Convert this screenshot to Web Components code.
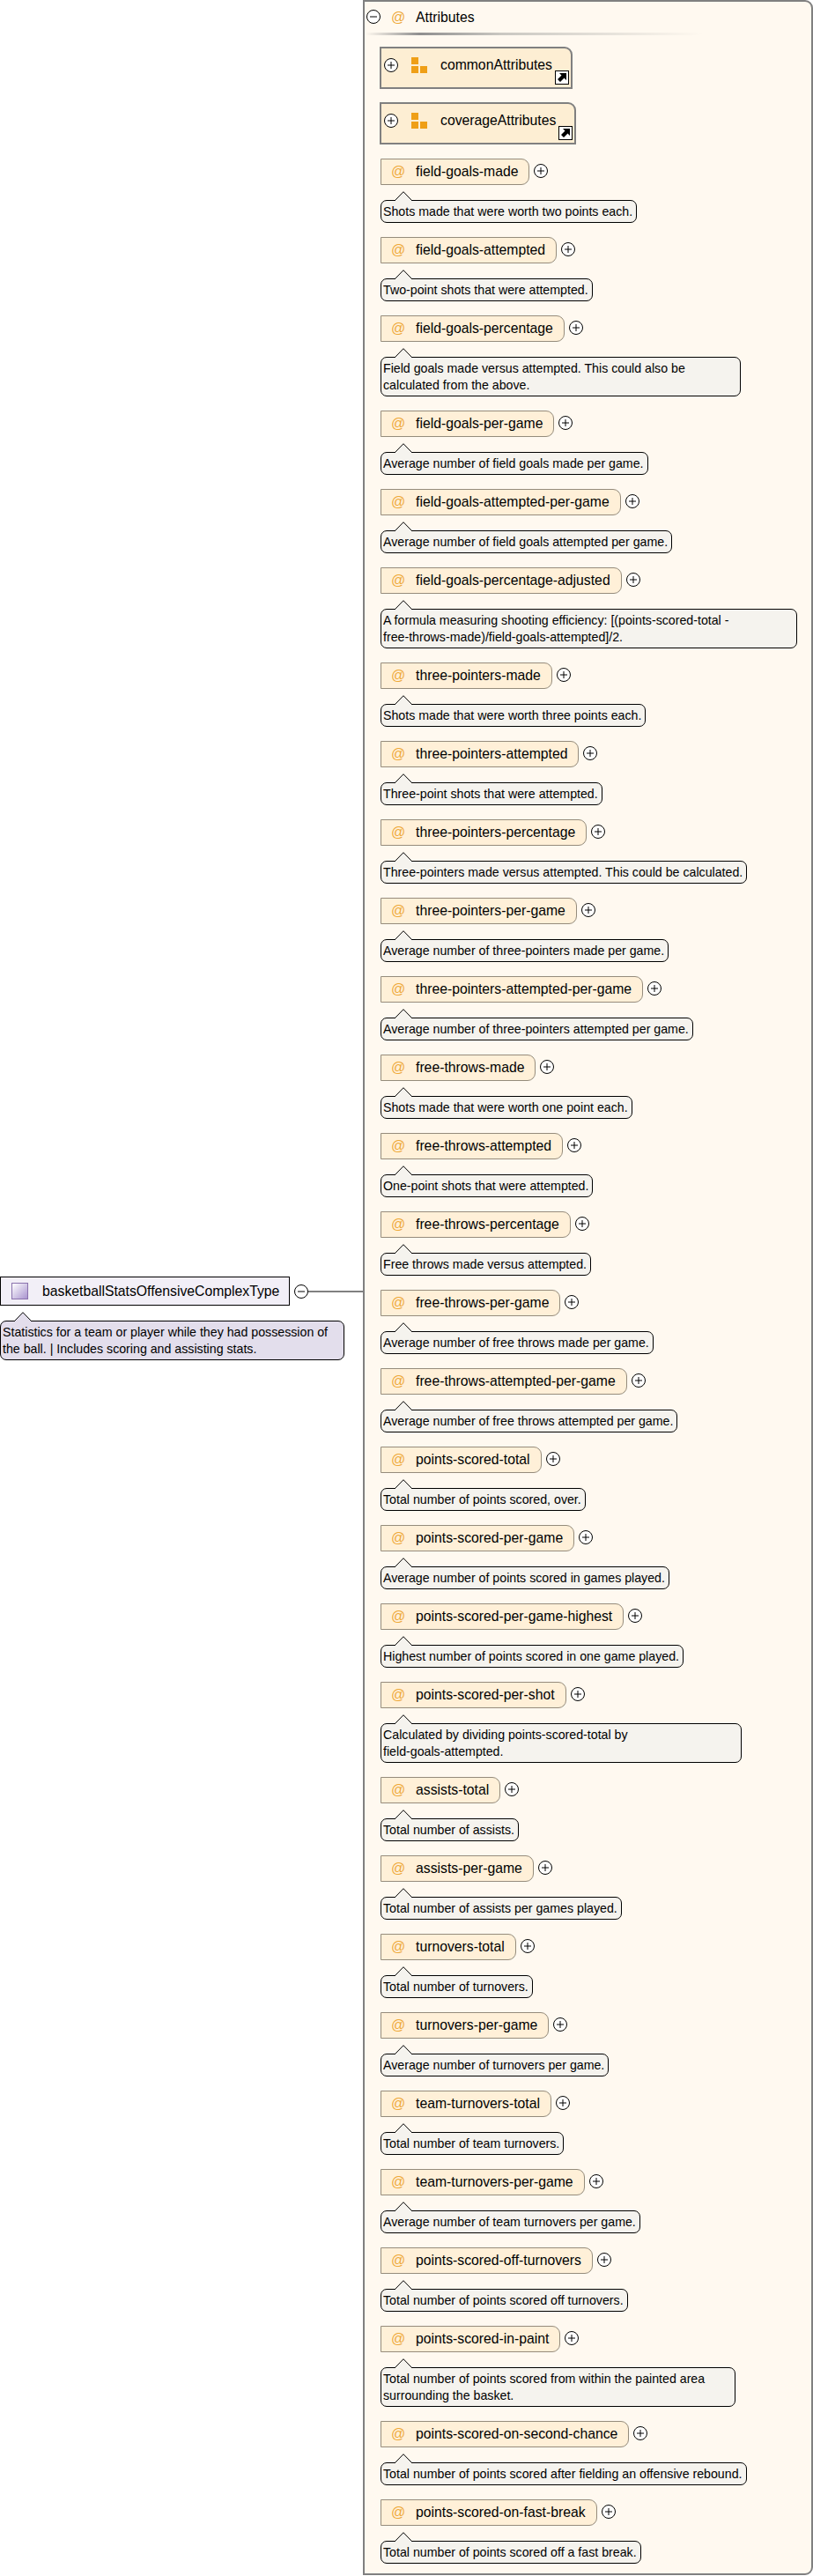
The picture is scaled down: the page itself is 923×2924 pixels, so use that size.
<!DOCTYPE html>
<html>
<head>
<meta charset="utf-8">
<title>basketballStatsOffensiveComplexType</title>
<style>
  html, body { margin: 0; padding: 0; background: #fff; }
  body { font-family: "Liberation Sans", Arial, sans-serif; color: #000; }
</style>
</head>
<body>
<schema-diagram></schema-diagram>

<script>
const attributes = [
  ["field-goals-made", "Shots made that were worth two points each."],
  ["field-goals-attempted", "Two-point shots that were attempted."],
  ["field-goals-percentage", "Field goals made versus attempted. This could also be<br>calculated from the above.", 409],
  ["field-goals-per-game", "Average number of field goals made per game."],
  ["field-goals-attempted-per-game", "Average number of field goals attempted per game."],
  ["field-goals-percentage-adjusted", "A formula measuring shooting efficiency: [(points-scored-total -<br>free-throws-made)/field-goals-attempted]/2.", 473],
  ["three-pointers-made", "Shots made that were worth three points each."],
  ["three-pointers-attempted", "Three-point shots that were attempted."],
  ["three-pointers-percentage", "Three-pointers made versus attempted. This could be calculated."],
  ["three-pointers-per-game", "Average number of three-pointers made per game."],
  ["three-pointers-attempted-per-game", "Average number of three-pointers attempted per game."],
  ["free-throws-made", "Shots made that were worth one point each."],
  ["free-throws-attempted", "One-point shots that were attempted."],
  ["free-throws-percentage", "Free throws made versus attempted."],
  ["free-throws-per-game", "Average number of free throws made per game."],
  ["free-throws-attempted-per-game", "Average number of free throws attempted per game."],
  ["points-scored-total", "Total number of points scored, over."],
  ["points-scored-per-game", "Average number of points scored in games played."],
  ["points-scored-per-game-highest", "Highest number of points scored in one game played."],
  ["points-scored-per-shot", "Calculated by dividing points-scored-total by<br>field-goals-attempted.", 410],
  ["assists-total", "Total number of assists."],
  ["assists-per-game", "Total number of assists per games played."],
  ["turnovers-total", "Total number of turnovers."],
  ["turnovers-per-game", "Average number of turnovers per game."],
  ["team-turnovers-total", "Total number of team turnovers."],
  ["team-turnovers-per-game", "Average number of team turnovers per game."],
  ["points-scored-off-turnovers", "Total number of points scored off turnovers."],
  ["points-scored-in-paint", "Total number of points scored from within the painted area<br>surrounding the basket.", 403],
  ["points-scored-on-second-chance", "Total number of points scored after fielding an offensive rebound."],
  ["points-scored-on-fast-break", "Total number of points scored off a fast break."]
];

/* little +/- circle next to the nodes */
class ExpandToggle extends HTMLElement {
  constructor() {
    super();
    const bar = this.hasAttribute("open") ? "" : '<path d="M8 4V12"/>';
    this.attachShadow({ mode: "open" }).innerHTML = `
      <style>
        :host { display: block; width: 16px; height: 16px; flex: none; }
        svg { display: block; fill: none; stroke: #000; stroke-width: 1; }
      </style>
      <svg width="16" height="16" viewBox="0 0 16 16">
        <circle cx="8" cy="8" r="7.5" fill="#fff"/>
        <path d="M4 8H12"/>${bar}
      </svg>`;
  }
}
customElements.define("expand-toggle", ExpandToggle);

/* documentation bubble with the notch on top */
class DocBubble extends HTMLElement {
  constructor() {
    super();
    const wide = this.getAttribute("width");
    this.attachShadow({ mode: "open" }).innerHTML = `
      <style>
        :host { display: block; width: max-content; font-size: 14.2px; line-height: 19px; --fill: #f5f3ee; }
        svg { display: block; margin: 0 0 -1px 10px; width: 32px; height: 11px; position: relative; }
        .text {
          box-sizing: border-box;
          ${wide ? "width:" + wide + "px;" : ""}
          min-height: 26px;
          padding: 3px 4px 2px 2px;
          border: 1px solid #000;
          border-radius: 7px;
          background: var(--fill);
          white-space: nowrap;
        }
      </style>
      <svg viewBox="0 0 32 11">
        <path d="M6 11 L16 .7 L26 11" fill="var(--fill)" stroke="#000"/>
      </svg>
      <div class="text"><slot></slot></div>`;
  }
}
customElements.define("doc-bubble", DocBubble);

/* one attribute: name box, toggle and its documentation */
class AttrRow extends HTMLElement {
  constructor() {
    super();
    this.attachShadow({ mode: "open" }).innerHTML = `
      <style>
        :host { display: block; margin: 0 0 16px 1px; }
        .head { display: flex; align-items: center; gap: 5px; margin-bottom: 7px; }
        .name {
          box-sizing: border-box;
          display: flex;
          align-items: center;
          height: 30px;
          padding: 0 12px 0 11px;
          border: 1px solid #958c7c;
          border-radius: 0 9px 9px 0;
          background: #fff0d8;
          font-size: 15.75px;
          white-space: nowrap;
        }
        .at { width: 28px; color: #eea93a; font-size: 16px; }
        expand-toggle { margin-top: -2px; }
      </style>
      <div class="head">
        <div class="name"><span class="at">@</span><span>${this.getAttribute("name")}</span></div>
        <expand-toggle></expand-toggle>
      </div>
      <doc-bubble width="${this.getAttribute("width") || ""}"><slot></slot></doc-bubble>`;
    if (!this.getAttribute("width")) {
      this.shadowRoot.querySelector("doc-bubble").removeAttribute("width");
    }
  }
}
customElements.define("attr-row", AttrRow);

/* referenced attribute group with the shortcut arrow */
class GroupRef extends HTMLElement {
  constructor() {
    super();
    this.attachShadow({ mode: "open" }).innerHTML = `
      <style>
        :host { display: block; width: max-content; margin-bottom: 15px; }
        .box {
          box-sizing: border-box;
          position: relative;
          display: flex;
          align-items: center;
          height: 48px;
          padding: 0 21px 6px 3px;
          border: 2px solid #808080;
          border-radius: 0 9px 0 0;
          background: #fdeed3;
          font-size: 15.75px;
        }
        .icon { display: block; margin: 0 15px 0 15px; }
        .link { position: absolute; right: 2px; bottom: 3px; display: block; }
      </style>
      <div class="box">
        <expand-toggle></expand-toggle>
        <svg class="icon" width="18" height="18" viewBox="0 0 18 18" fill="#ef9f17">
          <rect width="8" height="8"/><rect y="10" width="8" height="8"/><rect x="10" y="10" width="8" height="8"/>
        </svg>
        <span>${this.getAttribute("name")}</span>
        <svg class="link" width="16" height="16" viewBox="0 0 16 16">
          <rect x=".5" y=".5" width="15" height="15" fill="#fff" stroke="#000"/>
          <path d="M5 3H13V11L10.5 8.5L6 13L3 10L7.5 5.5Z" fill="#000"/>
        </svg>
      </div>`;
  }
}
customElements.define("group-ref", GroupRef);

/* big rounded panel holding all attributes */
class AttrPanel extends HTMLElement {
  constructor() {
    super();
    this.attachShadow({ mode: "open" }).innerHTML = `
      <style>
        :host {
          display: block;
          box-sizing: border-box;
          width: 511px;
          height: 2923px;
          border: 2px solid #808080;
          border-radius: 0 9px 9px 0;
          background: #fff9f0;
        }
        .title { display: flex; align-items: center; height: 35px; padding-left: 2px; font-size: 15.75px; }
        .title expand-toggle { margin-top: -2px; }
        .at { width: 28px; margin-left: 12px; color: #eea93a; font-size: 16px; }
        .rule { width: 382px; height: 3px; margin: 0 0 13px 1px;
          background: linear-gradient(90deg, #fff9f0 0, #8f8f8f 16%, #c9c7c1 40%, #fff9f0 100%); }
        .body { padding-left: 17px; }
      </style>
      <div class="title"><expand-toggle open></expand-toggle><span class="at">@</span><span>Attributes</span></div>
      <div class="rule"></div>
      <div class="body"><slot></slot></div>`;
  }
}
customElements.define("attr-panel", AttrPanel);

/* the complex type on the left */
class TypeNode extends HTMLElement {
  constructor() {
    super();
    this.attachShadow({ mode: "open" }).innerHTML = `
      <style>
        :host { display: block; width: 412px; padding-top: 1449px; flex: none; }
        .line { display: flex; align-items: center; }
        .box {
          box-sizing: border-box;
          display: flex;
          align-items: center;
          width: 329px;
          height: 33px;
          padding-left: 12px;
          border: 1px solid #000;
          background: #f2eff7;
          font-size: 15.75px;
        }
        .swatch {
          box-sizing: border-box;
          width: 19px;
          height: 19px;
          margin-right: 16px;
          border: 1px solid #8a72ad;
          background: linear-gradient(135deg, #ffffff, #a994cf);
        }
        .wire { flex: 1; height: 2px; background: #808080; }
        expand-toggle { margin-left: 5px; }
        doc-bubble { --fill: #e3deec; margin-top: 7px; }
      </style>
      <div class="line">
        <div class="box"><span class="swatch"></span><span>${this.getAttribute("name")}</span></div>
        <expand-toggle open></expand-toggle>
        <div class="wire"></div>
      </div>
      <doc-bubble width="391"><slot></slot></doc-bubble>`;
  }
}
customElements.define("type-node", TypeNode);

class SchemaDiagram extends HTMLElement {
  constructor() {
    super();
    const rows = attributes.map(a =>
      `<attr-row name="${a[0]}"${a[2] ? ' width="' + a[2] + '"' : ""}>${a[1]}</attr-row>`).join("");
    this.attachShadow({ mode: "open" }).innerHTML = `
      <style>
        :host { display: flex; align-items: flex-start; width: 923px; }
      </style>
      <type-node name="basketballStatsOffensiveComplexType">Statistics for a team or player while they had possession of<br>the ball. | Includes scoring and assisting stats.</type-node>
      <attr-panel>
        <group-ref name="commonAttributes"></group-ref>
        <group-ref name="coverageAttributes" style="margin-bottom:16px"></group-ref>
        ${rows}
      </attr-panel>`;
  }
}
customElements.define("schema-diagram", SchemaDiagram);
</script>
</body>
</html>
